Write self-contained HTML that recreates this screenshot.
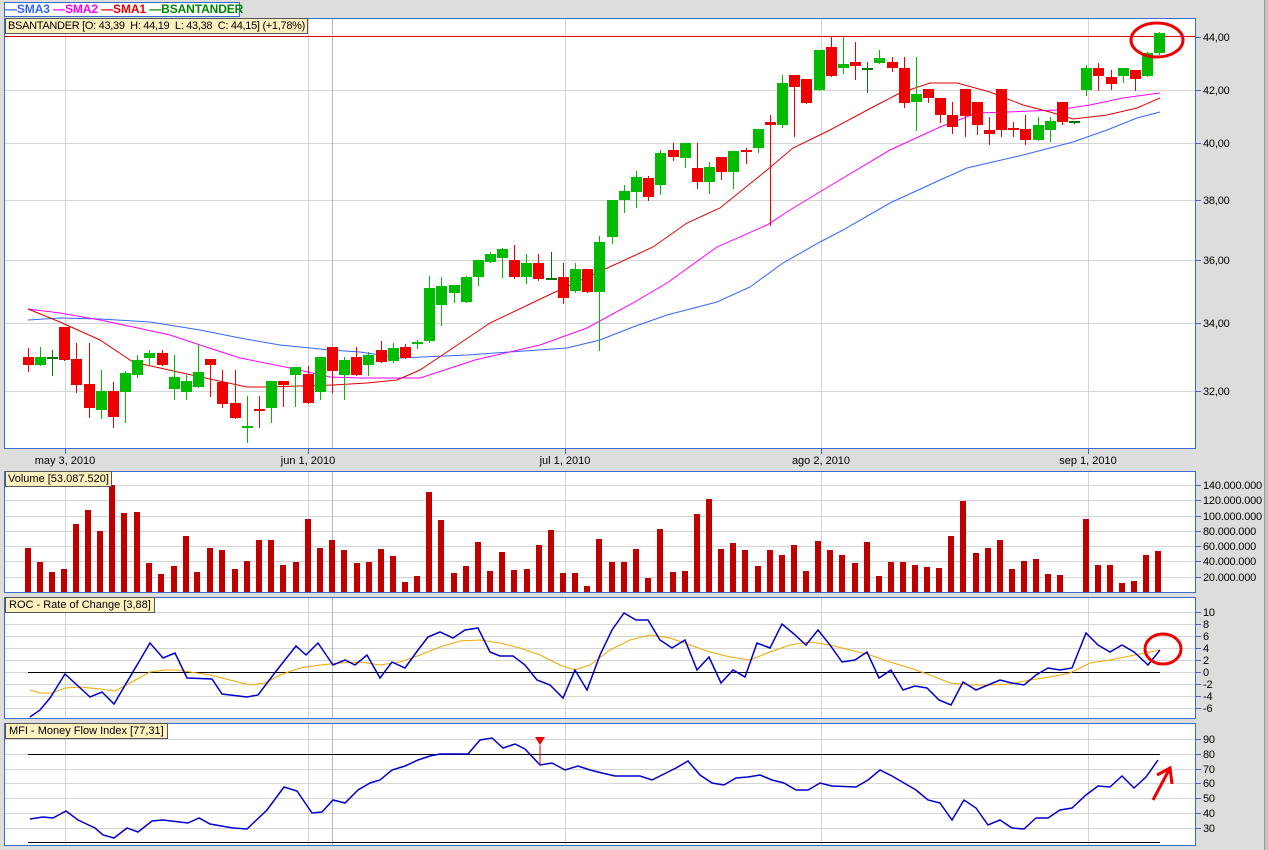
<!DOCTYPE html>
<html><head><meta charset="utf-8"><style>
html,body{margin:0;padding:0;background:#dcdddc;width:1268px;height:850px;overflow:hidden}
svg{display:block}
text{font-family:"Liberation Sans",sans-serif;font-size:11px;fill:#000}
</style></head><body>
<svg id="s" width="1268" height="850" xmlns="http://www.w3.org/2000/svg">
<rect x="0" y="0" width="1268" height="850" fill="#dcdddc"/>
<rect x="1264" y="0" width="4" height="850" fill="#c4c4c4"/>
<line x1="1264.5" y1="0" x2="1264.5" y2="850" stroke="#999"/>
<rect x="4.5" y="18.5" width="1191" height="430" fill="#fff" stroke="#3a6bc8"/>
<rect x="4.5" y="471.5" width="1191" height="121" fill="#fff" stroke="#3a6bc8"/>
<rect x="4.5" y="597.5" width="1191" height="121" fill="#fff" stroke="#3a6bc8"/>
<rect x="4.5" y="723.5" width="1191" height="122" fill="#fff" stroke="#3a6bc8"/>
<g id="grid" stroke="#d4d4d4" stroke-width="1"></g>
<g id="content"></g>
<g id="labels"></g>
</svg>
<script>
var NS="http://www.w3.org/2000/svg";
function el(p,t,a,txt){var e=document.createElementNS(NS,t);for(var k in a)e.setAttribute(k,a[k]);if(txt!=null)e.textContent=txt;p.appendChild(e);return e;}
var G=document.getElementById('grid'),C=document.getElementById('content'),L=document.getElementById('labels');
function hg(y){el(G,'line',{x1:5,x2:1195,y1:y+.5,y2:y+.5});}
function ylab(y,t){el(L,'line',{x1:1196,x2:1201,y1:y+.5,y2:y+.5,stroke:'#3a6bc8'});el(L,'text',{x:1203,y:y+4,'letter-spacing':'-0.2'},t);}
[[90,'42,00'],[143,'40,00'],[200,'38,00'],[260,'36,00'],[323,'34,00'],[391,'32,00']].forEach(function(a){hg(a[0]);ylab(a[0],a[1]);});
ylab(37,'44,00');
[[485,'140.000.000'],[500,'120.000.000'],[516,'100.000.000'],[531,'80.000.000'],[546,'60.000.000'],[561,'40.000.000'],[577,'20.000.000']].forEach(function(a){hg(a[0]);ylab(a[0],a[1]);});
[[612,'10'],[624,'8'],[636,'6'],[648,'4'],[660,'2'],[672,'0'],[684,'-2'],[696,'-4'],[708,'-6']].forEach(function(a){hg(a[0]);ylab(a[0],a[1]);});
[[739,'90'],[754,'80'],[769,'70'],[783,'60'],[798,'50'],[813,'40'],[828,'30']].forEach(function(a){hg(a[0]);ylab(a[0],a[1]);});
var panels=[[19,448],[472,592],[598,718],[724,845]];
[65,308,565,821,1088].forEach(function(x){panels.forEach(function(p){el(G,'line',{x1:x+.5,x2:x+.5,y1:p[0],y2:p[1]});});});
panels.forEach(function(p){el(G,'line',{x1:332.5,x2:332.5,y1:p[0],y2:p[1],stroke:'#b8b8b8'});});
[[65,'may 3, 2010'],[308,'jun 1, 2010'],[565,'jul 1, 2010'],[821,'ago 2, 2010'],[1088,'sep 1, 2010']].forEach(function(a){
 el(L,'line',{x1:a[0]+.5,x2:a[0]+.5,y1:449,y2:454,stroke:'#3a6bc8'});
 el(L,'text',{x:a[0],y:464,'text-anchor':'middle'},a[1]);});
el(C,'line',{x1:5,x2:1195,y1:36.5,y2:36.5,stroke:'#e00000'});
function pl(pts,col,w){el(C,'polyline',{points:pts.map(function(p){return p.join(',')}).join(' '),fill:'none',stroke:col,'stroke-width':w||1});}
pl([[28,320],[60,318],[100,319],[150,322],[200,330],[240,338],[280,345],[330,350],[360,352],[400,358],[467,355],[567,348],[600,340],[633,327],[667,315],[717,302],[750,287],[783,263],[820,242],[843,230],[890,203],[940,180],[967,168],[1023,155],[1073,142],[1107,130],[1137,118],[1160,112]],'#3366ff');
pl([[28,309],[60,313],[100,320],[133,327],[170,335],[200,345],[240,358],[290,368],[330,377],[360,378],[420,378],[475,360],[540,345],[587,328],[633,303],[667,283],[717,247],[767,225],[790,210],[823,190],[890,150],[940,127],[977,113],[1007,112],[1057,110],[1090,105],[1123,98],[1160,93]],'#ff00ff');
pl([[28,309],[60,322],[100,340],[133,362],[187,374],[247,387],[267,387],[333,385],[367,383],[397,380],[420,370],[435,360],[490,323],[553,293],[603,270],[653,247],[687,223],[720,208],[767,170],[793,148],[830,130],[873,107],[900,93],[930,83],[957,83],[990,92],[1023,105],[1050,112],[1073,119],[1107,115],[1137,108],[1160,98]],'#e00000');
var K=[[23,357,365,348,371,'r'],[35,357,365,347,365,'g'],[47,357,357,350,375,'d'],[59,327,360,327,360,'r'],[71,359,385,343,392,'r'],[84,384,408,343,417,'r'],[96,391,410,370,418,'g'],[108,391,417,382,427,'r'],[120,373,392,371,422,'g'],[132,360,375,355,377,'g'],[144,353,358,350,365,'g'],[157,353,365,350,365,'r'],[169,377,389,355,399,'g'],[181,381,392,375,399,'g'],[193,372,387,344,387,'g'],[205,359,365,359,396,'r'],[217,382,404,370,407,'r'],[230,403,418,370,418,'r'],[242,426,428,396,442,'g'],[254,409,411,396,427,'r'],[266,381,408,381,422,'g'],[278,381,385,381,406,'r'],[290,367,375,367,406,'g'],[303,374,403,366,403,'r'],[315,357,392,357,399,'g'],[327,347,371,347,392,'r'],[339,360,375,357,399,'g'],[351,357,375,347,375,'r'],[363,355,365,352,375,'g'],[376,350,362,341,362,'r'],[388,348,361,343,362,'g'],[400,347,358,344,358,'r'],[412,342,344,340,348,'g'],[424,288,341,276,342,'g'],[436,286,305,277,325,'g'],[449,285,293,285,302,'g'],[461,277,302,276,302,'g'],[473,260,277,260,285,'g'],[485,254,262,252,262,'g'],[497,249,258,248,277,'g'],[509,260,277,245,278,'r'],[521,263,277,254,283,'g'],[533,263,279,254,280,'r'],[546,278,278,252,279,'d'],[558,277,298,263,303,'r'],[570,269,291,263,292,'g'],[582,269,292,269,292,'r'],[594,242,292,236,350,'g'],[607,200,237,200,243,'g'],[619,191,200,185,212,'g'],[631,177,192,171,207,'g'],[643,178,197,176,200,'r'],[655,153,185,150,194,'g'],[668,150,157,143,160,'r'],[680,143,158,143,167,'g'],[692,168,182,143,188,'r'],[704,167,182,162,193,'g'],[716,157,172,157,179,'r'],[728,151,172,151,188,'g'],[741,150,152,148,163,'r'],[753,129,148,129,152,'g'],[765,122,125,115,225,'r'],[777,83,125,75,127,'g'],[789,75,87,75,136,'r'],[801,79,103,79,103,'r'],[814,50,90,50,90,'g'],[826,47,76,37,76,'r'],[838,64,68,37,73,'g'],[850,62,66,42,79,'r'],[862,68,70,62,92,'d'],[874,58,63,50,63,'g'],[887,62,68,57,71,'r'],[899,68,103,57,107,'r'],[911,94,102,57,130,'g'],[923,89,98,89,102,'r'],[935,98,115,98,122,'r'],[947,115,127,102,133,'r'],[960,89,116,89,136,'r'],[972,102,125,102,134,'r'],[984,130,134,117,144,'r'],[996,89,130,89,136,'r'],[1008,128,130,122,136,'r'],[1020,129,140,115,144,'r'],[1033,125,140,117,140,'g'],[1045,121,130,117,141,'g'],[1057,102,122,102,124,'r'],[1069,121,123,121,123,'d'],[1081,68,90,65,95,'g'],[1093,68,76,63,90,'r'],[1106,77,84,70,89,'r'],[1118,68,76,68,82,'g'],[1130,70,79,70,90,'r'],[1142,53,76,52,76,'g'],[1154,33,53,32,54,'g']];
K.forEach(function(k){var col=k[5]=='r'?'#ee0000':(k[5]=='g'?'#00bb00':'#007700');var cx=k[0]+5.5;
 el(C,'line',{x1:cx,x2:cx,y1:k[3],y2:k[4]+1,stroke:col,'stroke-width':1});
 var h=Math.max(k[2]-k[1],2);el(C,'rect',{x:k[0],y:k[1],width:11,height:h,fill:col});});
el(C,'ellipse',{cx:1157,cy:40,rx:26,ry:17,fill:'none',stroke:'#ee0000','stroke-width':3});
var VX=[28,40,52,64,76,88,100,112,124,137,149,161,174,186,197,210,222,235,247,259,271,283,296,308,320,332,344,357,369,381,393,405,417,429,441,454,466,478,490,502,514,527,539,551,563,575,587,599,612,624,636,648,660,673,685,697,709,721,733,745,758,770,782,794,806,818,830,842,855,867,879,891,903,915,927,939,951,963,976,988,1000,1012,1024,1036,1048,1060,1086,1098,1110,1122,1134,1146,1158];
var VY=[548,562,572,569,524,510,531,485,513,512,563,574,566,536,572,548,550,569,561,540,540,565,562,519,548,540,550,563,562,549,556,582,576,492,520,573,566,542,571,552,570,569,545,530,573,573,586,539,562,562,549,578,529,572,571,514,499,549,543,550,566,550,555,545,571,541,550,555,563,542,576,562,562,565,567,568,536,501,553,548,540,569,561,559,574,575,519,565,565,583,581,555,551];
VX.forEach(function(x,i){el(C,'rect',{x:x-3,y:VY[i],width:6,height:592-VY[i],fill:'#c00000'});});
el(C,'line',{x1:28,x2:1160,y1:672.5,y2:672.5,stroke:'#000'});
pl([[30,690],[40,693],[52,693],[65,688],[80,687],[100,689],[115,691],[130,683],[150,672],[165,670],[180,670],[190,672],[210,675],[230,680],[250,685],[265,683],[280,675],[300,668],[320,665],[340,663],[360,662],[380,665],[400,662],[420,655],[440,647],[460,641],[480,640],[500,643],[520,648],[540,655],[560,665],[575,670],[590,665],[610,650],[630,640],[650,635],[670,638],[690,645],[710,652],[730,657],[750,660],[770,652],[790,645],[810,642],[830,645],[850,650],[870,655],[890,662],[910,668],[930,675],[950,683],[970,685],[990,685],[1010,684],[1030,680],[1050,677],[1070,673],[1090,663],[1110,660],[1130,656],[1150,652],[1160,650]],'#f0a800');
pl([[30,717],[40,710],[50,698],[65,674],[90,697],[102,692],[114,704],[150,643],[163,658],[175,653],[187,678],[212,679],[222,694],[247,697],[258,695],[277,670],[296,646],[306,655],[318,643],[333,665],[345,660],[355,665],[367,655],[380,678],[392,662],[405,668],[418,650],[428,637],[440,632],[453,638],[465,630],[478,628],[490,652],[500,656],[513,656],[525,665],[537,680],[550,685],[563,698],[575,670],[587,690],[600,655],[612,630],[624,613],[636,620],[648,620],[660,640],[672,648],[685,640],[697,670],[709,657],[721,683],[733,670],[745,677],[757,643],[770,648],[782,624],[794,634],[806,645],[818,630],[830,645],[842,662],[855,660],[867,652],[879,678],[891,670],[903,690],[915,686],[927,688],[939,700],[951,705],[963,682],[976,690],[988,685],[1000,680],[1012,683],[1024,685],[1036,675],[1048,668],[1060,670],[1072,668],[1086,633],[1098,645],[1110,652],[1122,645],[1134,652],[1148,665],[1160,650]],'#0000cc',1.5);
el(C,'ellipse',{cx:1163,cy:649,rx:18,ry:15,fill:'none',stroke:'#ee0000','stroke-width':3});
el(C,'line',{x1:28,x2:1160,y1:754.5,y2:754.5,stroke:'#000'});
el(C,'line',{x1:28,x2:1160,y1:842.5,y2:842.5,stroke:'#000'});
pl([[30,819],[43,817],[53,818],[66,811],[78,820],[95,828],[103,835],[114,838],[127,828],[138,832],[152,821],[163,820],[188,823],[199,818],[210,824],[233,828],[247,829],[267,810],[284,787],[297,791],[312,813],[322,812],[333,800],[345,803],[358,790],[370,783],[380,780],[392,770],[405,766],[418,760],[430,756],[440,754],[468,754],[480,740],[492,738],[503,748],[515,744],[525,749],[540,765],[552,763],[565,770],[578,766],[590,770],[602,773],[615,776],[640,776],[652,780],[664,774],[676,768],[688,761],[700,775],[712,783],[724,785],[736,778],[748,777],[760,775],[772,780],[784,783],[796,790],[808,790],[820,783],[832,786],[856,787],[868,780],[880,770],[892,776],[904,783],[916,790],[928,800],[940,803],[952,820],[964,800],[976,808],[988,825],[1000,820],[1012,828],[1024,829],[1036,818],[1048,818],[1060,810],[1072,808],[1086,795],[1098,786],[1110,787],[1122,776],[1134,788],[1146,777],[1158,760]],'#0000cc',1.5);
el(C,'path',{d:'M535 737 L545 737 L540 745 Z',fill:'#ee0000'});
el(C,'line',{x1:540,x2:540,y1:745,y2:765,stroke:'#ee0000'});
el(C,'path',{d:'M1153 800 L1170 768 M1157 775 L1170 768 L1172 784',fill:'none',stroke:'#ee0000','stroke-width':3});
</script>
<div style="position:absolute;left:4px;top:2px;width:234px;height:13px;background:#fff;border:1px solid #3a6bc8;font:bold 12px 'Liberation Sans',sans-serif;line-height:13px;white-space:nowrap;letter-spacing:-0.1px">
<span style="color:#3366ff">&#8212;SMA3</span> <span style="color:#ff00ff">&#8212;SMA2</span> <span style="color:#ee0000">&#8212;SMA1</span> <span style="color:#008800">&#8212;BSANTANDER</span></div>
<div style="position:absolute;left:5px;top:18px;padding:0 2px;height:14px;background:#fff0c0;border:1px solid #555;font:11px 'Liberation Sans',sans-serif;line-height:14px;white-space:nowrap;letter-spacing:-0.3px">BSANTANDER [O: 43,39&nbsp; H: 44,19&nbsp; L: 43,38&nbsp; C: 44,15] (+1,78%)</div>
<div style="position:absolute;left:5px;top:471px;padding:0 2px;height:14px;background:#fff0c0;border:1px solid #555;font:11px 'Liberation Sans',sans-serif;line-height:14px;white-space:nowrap">Volume [53.087.520]</div>
<div style="position:absolute;left:5px;top:597px;padding:0 3px;height:14px;background:#fff0c0;border:1px solid #555;font:11px 'Liberation Sans',sans-serif;line-height:14px;white-space:nowrap">ROC - Rate of Change [3,88]</div>
<div style="position:absolute;left:5px;top:723px;padding:0 3px;height:14px;background:#fff0c0;border:1px solid #555;font:11px 'Liberation Sans',sans-serif;line-height:14px;white-space:nowrap">MFI - Money Flow Index [77,31]</div>
</body></html>
